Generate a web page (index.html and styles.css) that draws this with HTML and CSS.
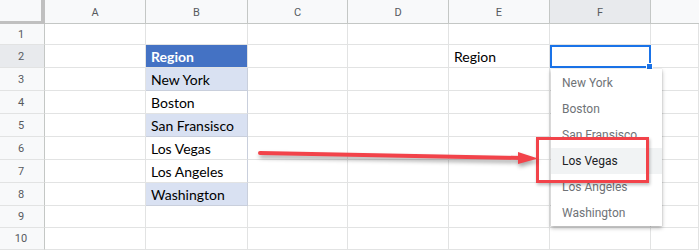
FILE: index.html
```html
<!DOCTYPE html>
<html lang="en">
<head>
  <meta charset="UTF-8">
  <title>Sheet dropdown</title>
  <link rel="stylesheet" href="styles.css">
</head>
<body>
  <div class="sheet">
    <div class="grid">
      <!-- header row -->
      <div class="corner"></div>
      <div class="col-head">A</div>
      <div class="col-head">B</div>
      <div class="col-head">C</div>
      <div class="col-head">D</div>
      <div class="col-head">E</div>
      <div class="col-head active">F</div>
      <div class="col-head last"></div>

      <!-- row 1 -->
      <div class="row-head">1</div>
      <div class="cell"></div><div class="cell"></div><div class="cell"></div><div class="cell"></div><div class="cell"></div><div class="cell"></div><div class="cell"></div>

      <!-- row 2 -->
      <div class="row-head active">2</div>
      <div class="cell"></div>
      <div class="cell head-cell">Region</div>
      <div class="cell"></div><div class="cell"></div>
      <div class="cell">Region</div>
      <div class="cell selected"></div>
      <div class="cell"></div>

      <!-- row 3 -->
      <div class="row-head">3</div>
      <div class="cell"></div>
      <div class="cell band">New York</div>
      <div class="cell"></div><div class="cell"></div><div class="cell"></div><div class="cell"></div><div class="cell"></div>

      <!-- row 4 -->
      <div class="row-head">4</div>
      <div class="cell"></div>
      <div class="cell plain">Boston</div>
      <div class="cell"></div><div class="cell"></div><div class="cell"></div><div class="cell"></div><div class="cell"></div>

      <!-- row 5 -->
      <div class="row-head">5</div>
      <div class="cell"></div>
      <div class="cell band">San Fransisco</div>
      <div class="cell"></div><div class="cell"></div><div class="cell"></div><div class="cell"></div><div class="cell"></div>

      <!-- row 6 -->
      <div class="row-head">6</div>
      <div class="cell"></div>
      <div class="cell plain">Los Vegas</div>
      <div class="cell"></div><div class="cell"></div><div class="cell"></div><div class="cell"></div><div class="cell"></div>

      <!-- row 7 -->
      <div class="row-head">7</div>
      <div class="cell"></div>
      <div class="cell plain">Los Angeles</div>
      <div class="cell"></div><div class="cell"></div><div class="cell"></div><div class="cell"></div><div class="cell"></div>

      <!-- row 8 -->
      <div class="row-head">8</div>
      <div class="cell"></div>
      <div class="cell band">Washington</div>
      <div class="cell"></div><div class="cell"></div><div class="cell"></div><div class="cell"></div><div class="cell"></div>

      <!-- row 9 -->
      <div class="row-head">9</div>
      <div class="cell"></div><div class="cell"></div><div class="cell"></div><div class="cell"></div><div class="cell"></div><div class="cell"></div><div class="cell"></div>

      <!-- row 10 -->
      <div class="row-head">10</div>
      <div class="cell"></div><div class="cell"></div><div class="cell"></div><div class="cell"></div><div class="cell"></div><div class="cell"></div><div class="cell"></div>
    </div>

    <!-- validation dropdown for F2 -->
    <ul class="dropdown">
      <li>New York</li>
      <li>Boston</li>
      <li>San Fransisco</li>
      <li class="hover">Los Vegas</li>
      <li>Los Angeles</li>
      <li>Washington</li>
    </ul>

    <div class="callout"></div>

    <svg class="arrow" width="290" height="24" viewBox="0 0 290 24">
      <line x1="4" y1="8" x2="266" y2="13" stroke="#f2434a" stroke-width="4" stroke-linecap="round"/>
      <polygon points="262,7 282,13.4 262,19" fill="#f2434a"/>
    </svg>
  </div>
</body>
</html>
```

FILE: styles.css
```css
* {
  box-sizing: border-box;
  margin: 0;
  padding: 0;
}

body {
  background: #fff;
  width: 699px;
  height: 250px;
  overflow: hidden;
}

.sheet {
  position: relative;
  width: 699px;
  height: 250px;
}

.grid {
  display: grid;
  grid-template-columns: 45px 101px 102px 100px 101px 101px 101px 48px;
  grid-template-rows: 24px 21px 23px 23px 23px 23px 23px 23px 23px 22px 22px;
}

.corner {
  background: #f8f9fa;
  border-right: 4px solid #c0c0c0;
  border-bottom: 3px solid #c0c0c0;
}

.col-head {
  background: #f8f9fa;
  border-right: 1px solid #c4c7c5;
  border-bottom: 1px solid #c4c7c5;
  font-family: Roboto, "Liberation Sans", sans-serif;
  font-size: 11px;
  color: #575a5e;
  display: flex;
  align-items: center;
  justify-content: center;
  padding-top: 1px;
}

.col-head.active {
  background: #e8eaed;
}

.col-head.last {
  border-right: none;
}

.row-head {
  background: #f8f9fa;
  border-right: 1px solid #c4c7c5;
  border-bottom: 1px solid #e2e3e3;
  font-family: Roboto, "Liberation Sans", sans-serif;
  font-size: 11px;
  color: #575a5e;
  display: flex;
  align-items: center;
  justify-content: center;
  padding-right: 2px;
}

.row-head.active {
  background: #e8eaed;
}

.cell {
  border-right: 1px solid #e2e3e3;
  border-bottom: 1px solid #e2e3e3;
  font-family: Lato, "Open Sans", sans-serif;
  font-size: 14px;
  color: #000;
  display: flex;
  align-items: flex-end;
  padding: 0 0 2px 5px;
  white-space: nowrap;
}

.head-cell {
  background: #4472c4;
  color: #fff;
  font-weight: bold;
}

.band {
  background: #d9e1f2;
  border-right-color: #c9cfdc;
  border-bottom-color: #c9cfdc;
}

.plain {
  border-right-color: #c9cfdc;
}

.selected {
  position: relative;
  outline: 2px solid #1a73e8;
  outline-offset: -2px;
}

.selected::after {
  content: "";
  position: absolute;
  right: -3px;
  bottom: -3px;
  width: 5px;
  height: 5px;
  background: #1a73e8;
  border: 1px solid #fff;
}

.dropdown {
  position: absolute;
  left: 551px;
  top: 69px;
  width: 111px;
  padding: 1px 0 0;
  list-style: none;
  background: #fff;
  box-shadow: 0 2px 4px rgba(0, 0, 0, 0.3), 0 0 1px rgba(0, 0, 0, 0.2);
}

.dropdown li {
  height: 26px;
  line-height: 26px;
  padding-left: 11px;
  font-family: Roboto, "Liberation Sans", sans-serif;
  font-size: 12px;
  color: #6f7377;
  white-space: nowrap;
}

.dropdown li.hover {
  background: #f1f3f4;
  color: #202124;
}

.callout {
  position: absolute;
  left: 536px;
  top: 137px;
  width: 113px;
  height: 46px;
  border: 3px solid #f2434a;
  box-shadow: 1px 2px 3px rgba(0, 0, 0, 0.25);
}

.arrow {
  position: absolute;
  left: 256px;
  top: 145px;
  filter: drop-shadow(1px 3px 2px rgba(0, 0, 0, 0.35));
}
```
